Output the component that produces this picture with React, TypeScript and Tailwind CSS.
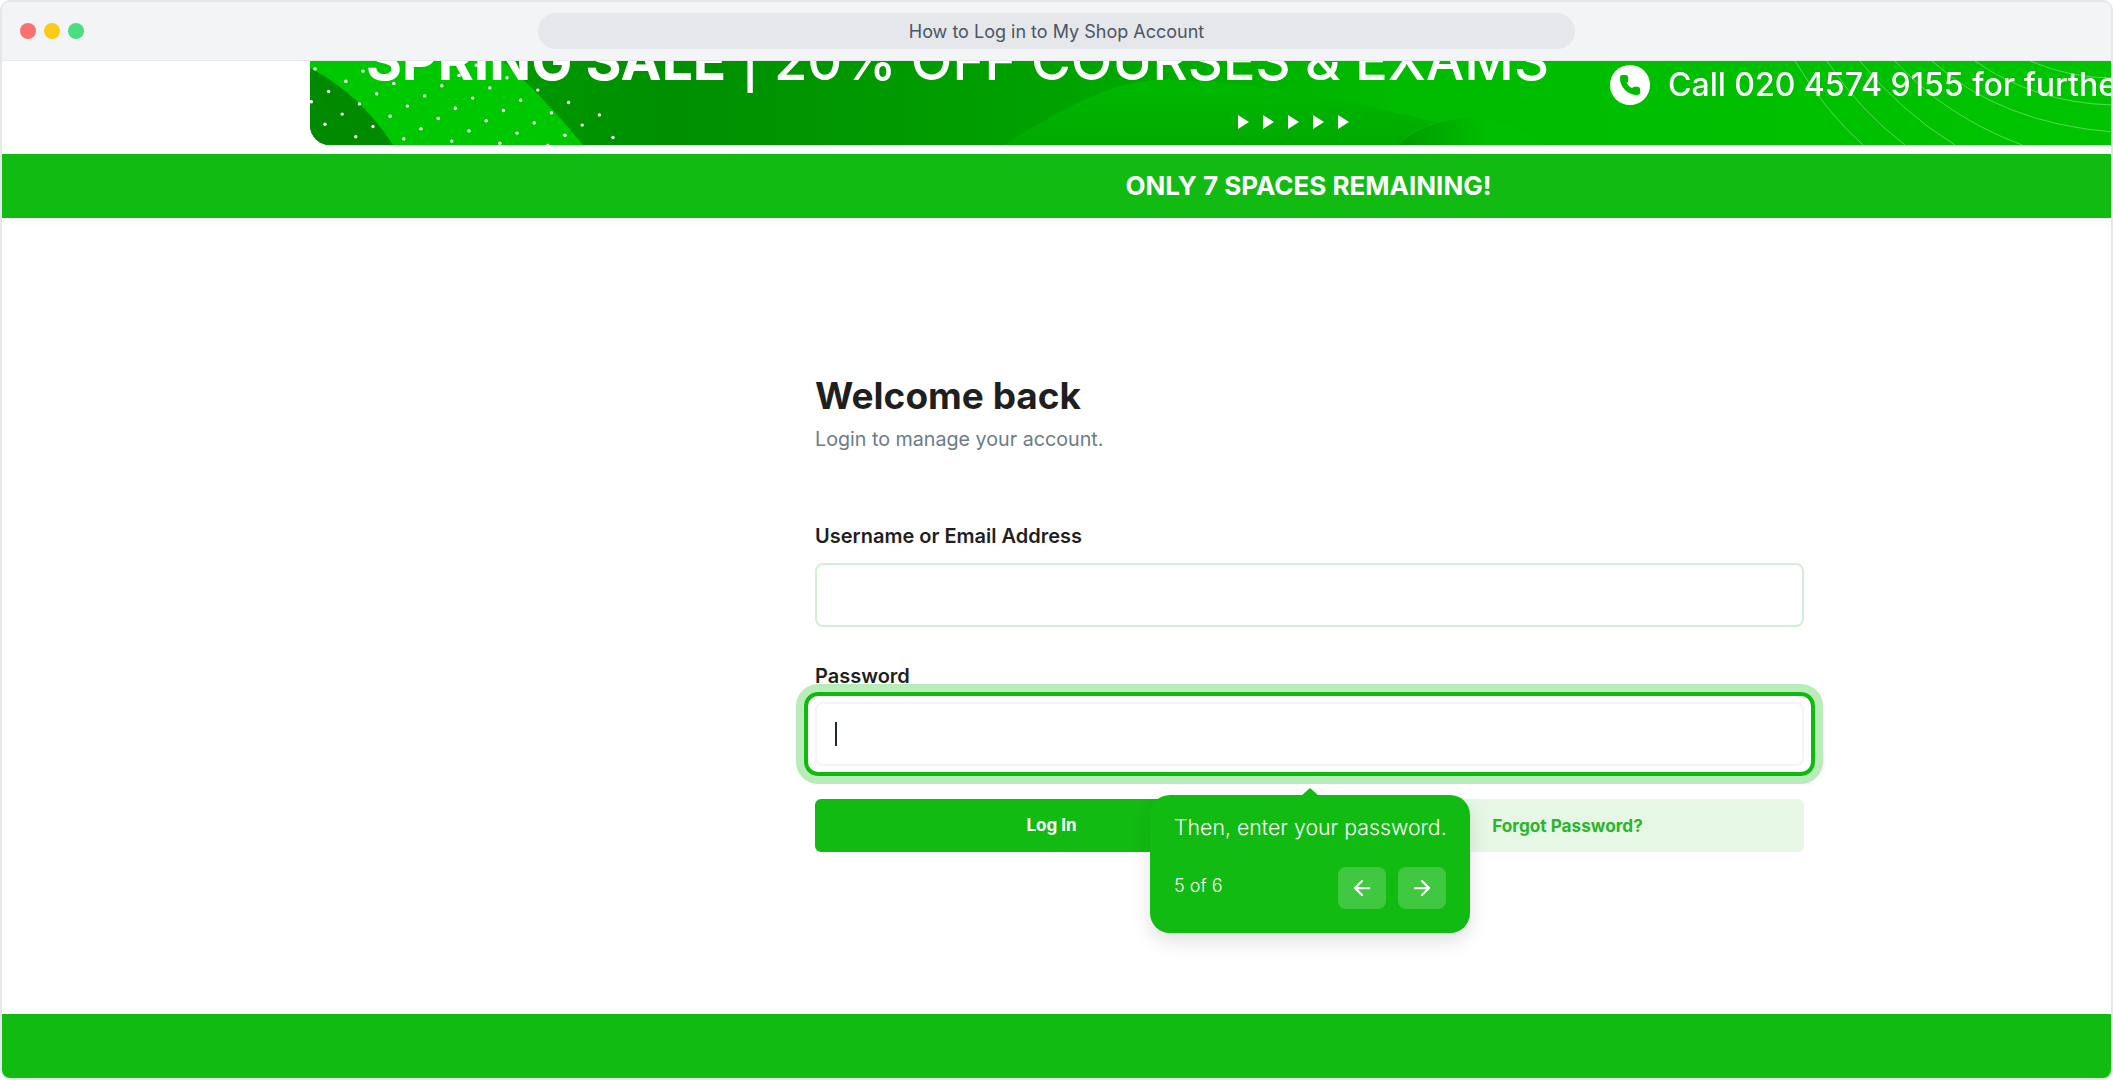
import { ArrowLeft, ArrowRight, Phone } from 'lucide-react';

// dot lattice of the banner art, in banner pixels
const bannerDots: { x: number; y: number }[] = [];
for (let i = -3; i <= 7; i++) {
  for (let j = -2; j <= 6; j++) {
    if (i + j > 12) continue;
    const x = 15 + i * 17.2 + j * 30.8;
    const y = 63.3 - i * 10.2 + j * 12.4;
    if (x >= -1 && y >= 0 && y <= 85) bannerDots.push({ x, y });
  }
}

const bannerArcs = [
  'M1485,0 Q1515,50 1553,84',
  'M1517,0 Q1550,50 1595,84',
  'M1550,0 Q1590,50 1645,84',
  'M1585,0 Q1635,55 1712,84',
  'M1622,0 Q1690,62 1803,71',
  'M1665,0 Q1725,42 1803,44',
  'M1720,0 Q1760,17 1803,17',
];

const BannerArt = () => (
  <svg className="block" width="1803" height="84" viewBox="0 0 1803 84">
    <defs>
      <linearGradient id="bannerBase" x1="0" x2="1" y1="0" y2="0">
        <stop offset="0" stopColor="#00a400" />
        <stop offset="0.2" stopColor="#008f00" />
        <stop offset="0.42" stopColor="#00a200" />
        <stop offset="0.6" stopColor="#00bb00" />
        <stop offset="1" stopColor="#00c400" />
      </linearGradient>
      <linearGradient id="bannerHill" x1="0" x2="0" y1="0" y2="1">
        <stop offset="0" stopColor="#00b800" />
        <stop offset="1" stopColor="#00aa00" />
      </linearGradient>
      <linearGradient id="bannerLeaf" x1="0" x2="1" y1="0" y2="0">
        <stop offset="0" stopColor="#009a00" />
        <stop offset="0.6" stopColor="#00be00" />
      </linearGradient>
    </defs>
    <rect width="1803" height="84" fill="url(#bannerBase)" />
    <path d="M0,0 L193,0 C225,28 252,58 273,84 L0,84 Z" fill="#00c800" />
    <path d="M0,7 C35,25 62,52 83,84 L0,84 Z" fill="#008a00" />
    <path d="M694,84 C740,55 800,19 850,19 C950,19 1060,45 1126,61 C1105,68 1095,76 1089,84 Z" fill="url(#bannerHill)" />
    <path d="M1089,84 C1100,70 1130,57 1166,57 C1200,60 1225,75 1233,84 Z" fill="url(#bannerLeaf)" />
    {bannerArcs.map((d) => (
      <path key={d} d={d} fill="none" stroke="#ffffff" strokeOpacity="0.35" strokeWidth="1" />
    ))}
    {bannerDots.map((dot) => (
      <circle key={`${dot.x}-${dot.y}`} cx={dot.x} cy={dot.y} r="1.7" fill="#ffffff" />
    ))}
    {[928, 953, 978, 1003, 1028].map((x) => (
      <polygon key={x} points={`${x},54 ${x + 11},61 ${x},68`} fill="#ffffff" />
    ))}
  </svg>
);

export default function App() {
  return (
    <div className="h-[1080px] flex flex-col overflow-hidden rounded-[10px] border-2 border-[#e5e7eb] bg-white font-['Inter',sans-serif]">
      {/* Browser chrome */}
      <div className="relative h-[59px] shrink-0 flex items-center justify-center bg-[#f3f4f6] border-b border-[#e5e7eb]">
        <div className="absolute left-[18px] flex gap-2">
          <span className="w-4 h-4 rounded-full bg-[#f87171]" />
          <span className="w-4 h-4 rounded-full bg-[#facc15]" />
          <span className="w-4 h-4 rounded-full bg-[#4ade80]" />
        </div>
        <div className="w-[1037px] h-9 rounded-full bg-[#e5e7eb] flex items-center justify-center text-[18px] text-[#4b5563]">
          How to Log in to My Shop Account
        </div>
      </div>

      {/* Promo banner */}
      <div className="shrink-0 pl-[308px]">
        <div className="relative h-[84px] w-[1803px] overflow-hidden rounded-bl-[20px] blur-[0.5px]">
          <BannerArt />
          <div className="absolute left-[56px] top-[-31px] whitespace-nowrap text-[54.3px] leading-[60px] font-medium text-white">
            <span className="text-[55px] font-bold">SPRING SALE</span> | 20% OFF COURSES &amp; EXAMS
          </div>
          <div className="absolute left-[1300px] top-[4px] flex items-center gap-[18px] whitespace-nowrap text-[32px] leading-[40px] font-medium text-white">
            <span className="w-10 h-10 rounded-full bg-white flex items-center justify-center">
              <Phone size={22} fill="#00bb00" stroke="#00bb00" />
            </span>
            Call 020 4574 9155 for further information
          </div>
        </div>
      </div>

      <div className="shrink-0 mt-[9px] h-[64px] bg-[#12bb12] flex items-center justify-center pl-[504px] pb-[2px] text-[26px] font-bold text-white">
        ONLY 7 SPACES REMAINING!
      </div>

      {/* Login form */}
      <main className="flex-1 pl-[813px] pt-[156px]">
        <div className="w-[989px]">
          <h1 className="text-[37px] leading-[44px] font-bold text-[#1f1f1f]">Welcome back</h1>
          <p className="mt-[7px] text-[19.7px] leading-7 text-[#6b7b8c]">Login to manage your account.</p>

          <label className="block mt-[69px] text-[20px] leading-7 font-semibold text-[#1f1f1f]">
            Username or Email Address
          </label>
          <input className="block w-full h-16 mt-[13px] rounded-lg border-2 border-[#d3efd3] bg-white" />

          <label className="block mt-[35px] text-[20px] leading-7 font-semibold text-[#1f1f1f]">Password</label>
          <div className="relative mt-3 h-16 rounded-lg border-2 border-[#f3f4f6] bg-white flex items-center pl-[18px]">
            <span className="w-0.5 h-6 bg-[#1f2937]" />
            {/* Step highlight */}
            <div className="absolute inset-x-[-13px] inset-y-[-12px] rounded-[14px] border-4 border-[#0fba0f] shadow-[0_0_0_8px_#b9ecb9]" />
          </div>

          <div className="relative mt-[33px] grid grid-cols-2 gap-[43px]">
            <button className="h-[53px] rounded-md bg-[#12bb12] text-[17px] font-bold text-white">Log In</button>
            <button className="h-[53px] rounded-md bg-[#e7f7e6] text-[17.2px] font-bold text-[#2ab52a]">
              Forgot Password?
            </button>

            {/* Guide tooltip */}
            <div className="absolute left-[335px] top-[-4px] w-[320px] h-[138px] rounded-[20px] bg-[#12bb12] px-6 pt-[18px] text-white shadow-[0_8px_20px_rgba(0,0,0,0.12)]">
              <span className="absolute left-[151px] top-[-7px] w-0 h-0 border-x-[9px] border-x-transparent border-b-[8px] border-b-[#12bb12]" />
              <p className="text-[21.3px] leading-7 font-light whitespace-nowrap">Then, enter your password.</p>
              <div className="mt-[26px] flex items-center justify-between">
                <span className="text-[18px] font-light mb-[6px]">5 of 6</span>
                <div className="flex gap-3">
                  <button className="w-12 h-[42px] rounded-lg bg-white/20 flex items-center justify-center">
                    <ArrowLeft size={24} strokeWidth={2.25} />
                  </button>
                  <button className="w-12 h-[42px] rounded-lg bg-white/20 flex items-center justify-center">
                    <ArrowRight size={24} strokeWidth={2.25} />
                  </button>
                </div>
              </div>
            </div>
          </div>
        </div>
      </main>

      <div className="shrink-0 h-[64px] bg-[#12bb12]" />
    </div>
  );
}
